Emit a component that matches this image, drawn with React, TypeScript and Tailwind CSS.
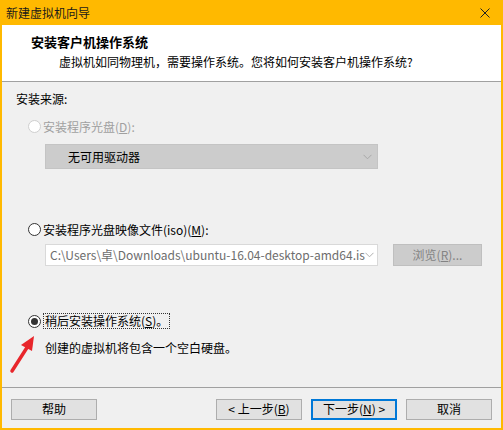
import React from 'react'

const FONT = { fontFamily: '"Noto Sans CJK SC", "Noto Sans", sans-serif' }

function Radio({ checked, disabled }: { checked?: boolean; disabled?: boolean }) {
  return (
    <span
      className={`flex h-[13px] w-[13px] shrink-0 items-center justify-center rounded-full border bg-white ${
        disabled ? 'border-[#cfcfcf]' : 'border-[#333333]'
      }`}
    >
      {checked && <span className="h-[7px] w-[7px] rounded-full bg-[#333333]" />}
    </span>
  )
}

function Chevron({ color }: { color: string }) {
  return (
    <svg width="9" height="6" viewBox="0 0 9 6" className="shrink-0">
      <path d="M0.5 0.8 L4.5 4.8 L8.5 0.8" fill="none" stroke={color} strokeWidth="1" />
    </svg>
  )
}

function Btn({ children, primary }: { children: React.ReactNode; primary?: boolean }) {
  return (
    <button
      type="button"
      className={`flex h-[21px] w-[86px] items-center justify-center bg-[#e1e1e1] text-[12px] leading-none text-black ${
        primary ? 'border-2 border-[#0078d7]' : 'border border-[#adadad]'
      }`}
    >
      {children}
    </button>
  )
}

export default function App() {
  return (
    <div className="flex h-[430px] w-[503px] flex-col overflow-hidden bg-[#ffb900] px-[2px] pb-[2px]" style={FONT}>
      {/* Title bar */}
      <div className="flex h-[25px] shrink-0 items-center justify-between pl-[4px] pr-[11px]">
        <span className="text-[12px] leading-none text-[#1a1a1a]">新建虚拟机向导</span>
        <svg width="10" height="10" viewBox="0 0 10 10">
          <path d="M0.5 0.5 L9.5 9.5 M9.5 0.5 L0.5 9.5" stroke="#222" strokeWidth="1" />
        </svg>
      </div>

      {/* Header */}
      <div className="flex h-[57px] shrink-0 flex-col border-b border-[#a0a0a0] bg-white pl-[29px] pt-[8px]">
        <span className="text-[13px] font-bold leading-[18px] text-black">安装客户机操作系统</span>
        <span className="mt-[2px] pl-[28px] text-[12px] leading-[17px] text-black">
          虚拟机如同物理机，需要操作系统。您将如何安装客户机操作系统?
        </span>
      </div>

      {/* Body */}
      <div className="relative flex flex-1 flex-col bg-[#f0f0f0] text-[12px] leading-none text-black">
        <div className="pl-[14px] pt-[11px]">安装来源:</div>

        <div className="mt-[15px] flex items-center gap-[2px] pl-[26px] text-[#a0a0a0]">
          <Radio disabled />
          <span>
            安装程序光盘(<span className="underline">D</span>):
          </span>
        </div>
        <div className="ml-[43px] mt-[11px] flex h-[25px] w-[333px] items-center justify-between border border-[#c4c4c4] bg-[#cccccc] pl-[22px] pr-[5px]">
          <span>无可用驱动器</span>
          <Chevron color="#a8a8a8" />
        </div>

        <div className="mt-[54px] flex items-center gap-[2px] pl-[26px]">
          <Radio />
          <span>
            安装程序光盘映像文件(iso)(<span className="underline">M</span>):
          </span>
        </div>
        <div className="mt-[8px] flex items-center pl-[43px]">
          <div className="flex h-[22px] w-[333px] items-center justify-between overflow-hidden border border-[#d9d9d9] bg-white pl-[4px] pr-[5px] text-[#6d6d6d]">
            <span className="whitespace-nowrap">C:\Users\卓\Downloads\ubuntu-16.04-desktop-amd64.is</span>
            <Chevron color="#b0b0b0" />
          </div>
          <div className="ml-[15px] flex h-[22px] w-[89px] items-center justify-center border border-[#bfbfbf] bg-[#cccccc] text-[#838383]">
            浏览(<span className="underline">R</span>)...
          </div>
        </div>

        <div className="mt-[47px] flex items-center gap-[2px] pl-[26px]">
          <Radio checked />
          <span className="border border-dotted border-[#333] px-[1px] py-[1px]">
            稍后安装操作系统(<span className="underline">S</span>)。
          </span>
        </div>
        <div className="mt-[13px] pl-[43px]">创建的虚拟机将包含一个空白硬盘。</div>

        {/* Red annotation arrow */}
        <svg className="absolute left-[6px] top-[252px]" width="32" height="40" viewBox="0 0 32 40">
          <path d="M4 37 L20 12" stroke="#e8262b" strokeWidth="3.5" strokeLinecap="round" />
          <path d="M26 2 L13 11 L24 17 Z" fill="#e8262b" />
        </svg>

        {/* Footer */}
        <div className="mt-auto flex h-[41px] shrink-0 items-center border-t border-[#a0a0a0] pl-[9px] pt-[2px]">
          <Btn>帮助</Btn>
          <div className="ml-[119px] flex gap-[9px]">
            <Btn>
              &lt; 上一步(<span className="underline">B</span>)
            </Btn>
            <Btn primary>
              下一步(<span className="underline">N</span>) &gt;
            </Btn>
            <Btn>取消</Btn>
          </div>
        </div>
      </div>
    </div>
  )
}
